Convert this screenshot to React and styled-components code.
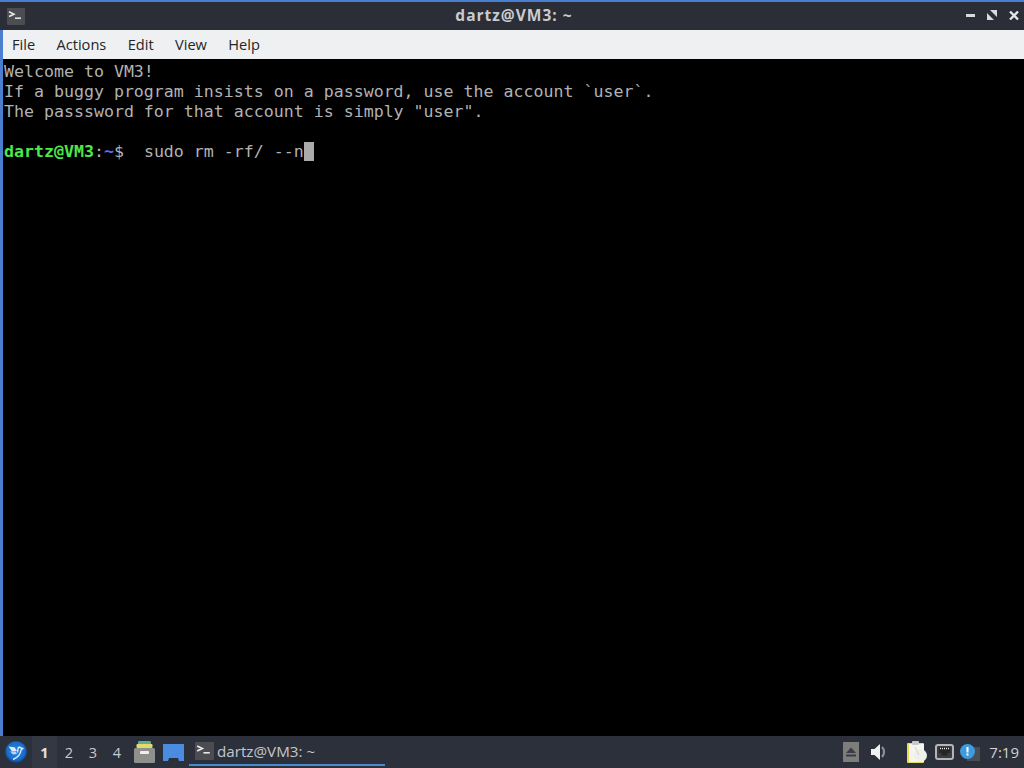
import React from "react";
import styled, { createGlobalStyle } from "styled-components";

const Global = createGlobalStyle`
  html, body { margin: 0; padding: 0; background: #000; overflow: hidden; }
`;

const Desktop = styled.div`
  width: 1024px;
  height: 768px;
  display: flex;
  flex-direction: column;
  font-family: "Open Sans", "Noto Sans", sans-serif;
`;

const Window = styled.div`
  flex: 1;
  min-height: 0;
  display: flex;
  flex-direction: column;
  border-top: 2px solid #4a7fd0;
  border-left: 3px solid #4a7fd0;
`;

const TitleBar = styled.div`
  height: 28px;
  background: #2b2e37;
  display: flex;
  align-items: center;
  padding: 0 5px 3px 7px;
  box-sizing: border-box;
  margin-left: -3px;
`;

const TitleIconBox = styled.div`
  width: 18px;
  height: 17px;
  display: flex;
  margin-top: 3px;
`;

const Title = styled.div`
  flex: 1;
  text-align: center;
  color: #c9cbd0;
  font-size: 15.5px;
  font-weight: 700;
  letter-spacing: 1px;
  padding-left: 37px;
`;

const WinButtons = styled.div`
  display: flex;
  gap: 12px;
  align-items: center;
  margin-top: 1px;
`;

const MenuBar = styled.div`
  height: 29px;
  box-sizing: border-box;
  padding: 0 0 2px 9px;
  background: #eff0f1;
  display: flex;
  align-items: center;
  gap: 21.4px;
  color: #232629;
  font-size: 14.6px;
`;

const Terminal = styled.div`
  flex: 1;
  background: #000;
  color: #b2b2b2;
  font-family: "DejaVu Sans Mono", monospace;
  font-size: 16.6px;
  line-height: 20px;
  padding: 3px 0 0 1px;
`;

const Line = styled.div`
  height: 20px;
  white-space: pre;
`;

const Green = styled.span`
  color: #4ce84c;
  font-weight: 700;
`;

const Blue = styled.span`
  color: #6a6af0;
  font-weight: 700;
`;

const Cursor = styled.span`
  display: inline-block;
  width: 10px;
  height: 19px;
  background: #aaaaaa;
  vertical-align: top;
`;

const Panel = styled.div`
  height: 32px;
  background: #2c303a;
  display: flex;
  align-items: center;
  color: #d6d8dc;
  font-size: 14px;
`;

const Launcher = styled.div`
  width: 32px;
  padding-left: 5px;
  box-sizing: border-box;
  display: flex;
`;

const Pager = styled.div`
  display: flex;
`;

const Desk = styled.div`
  width: ${(p) => (p.$active ? "25px" : "24px")};
  height: 32px;
  display: flex;
  align-items: center;
  justify-content: center;
  font-size: 14.5px;
  font-weight: ${(p) => (p.$active ? 700 : 400)};
  background: ${(p) => (p.$active ? "#343843" : "transparent")};
  color: ${(p) => (p.$active ? "#e0e2e5" : "#c8cacf")};
`;

const QuickLaunch = styled.div`
  display: flex;
  gap: 8px;
  margin-left: 5px;
  align-items: center;
`;

const Task = styled.div`
  width: 196px;
  height: 30px;
  margin-left: 5px;
  align-self: flex-start;
  box-sizing: border-box;
  border-bottom: 2px solid #4a8bd0;
  display: flex;
  align-items: center;
  gap: 3px;
  padding: 2px 0 0 6px;
  color: #c4c6cb;
  font-size: 15.2px;
`;

const Tray = styled.div`
  margin-left: auto;
  display: flex;
  align-items: center;
`;

const TraySlot = styled.div`
  display: flex;
  margin-right: ${(p) => p.$gap}px;
`;

const Clock = styled.div`
  margin: 0 5px 0 9px;
  font-size: 15px;
  color: #d0d2d6;
`;

const TermIcon = ({ size = 18, height = 18 }) => (
  <svg width={size} height={height} viewBox="0 0 18 18" preserveAspectRatio="none">
    <rect width="18" height="18" rx="1" fill="#4b4d52" />
    <path d="M2 4l5 2.5L2 9" fill="none" stroke="#e8e8e8" strokeWidth="1.6" />
    <rect x="8" y="10" width="6" height="1.6" fill="#e8e8e8" />
  </svg>
);

const LauncherIcon = () => (
  <svg width="22" height="22" viewBox="0 0 22 22">
    <defs>
      <radialGradient id="lg" cx="50%" cy="45%" r="55%">
        <stop offset="0" stopColor="#2a86e8" />
        <stop offset="0.75" stopColor="#1a6cc8" />
        <stop offset="1" stopColor="#123f78" />
      </radialGradient>
    </defs>
    <circle cx="11" cy="11" r="10.8" fill="url(#lg)" />
    {/* dove: two wings, body sweeping down to the tail, head top right */}
    <path d="M3.5 5.500l6 .8 2.500 3.700-5 .2z" fill="#dcecfa" />
    <path d="M5 10.500l5.500 0 1.500 2.500-4 .5z" fill="#dcecfa" opacity="0.8" />
    <path
      d="M8 18.500c3.500-1.500 7.500-4 8-9.500l2-1.500-2-.5c-1-1.500-3-.8-3 1l-.5 3.500"
      fill="none"
      stroke="#dcecfa"
      strokeWidth="1.400"
      strokeLinejoin="round"
    />
  </svg>
);

const FileManagerIcon = () => (
  <svg width="21" height="22" viewBox="0 0 21 22">
    <path d="M4 1.5c0-.8.5-1.5 1.500-1.500h10c1 0 1.500.7 1.500 1.500V4H4z" fill="#62ad90" />
    <rect x="2.500" y="3" width="16" height="4" rx="1" fill="#e3da6e" />
    <rect x="0" y="7" width="21" height="15" rx="1.500" fill="#8f8f8c" />
    <rect x="6" y="10" width="9" height="3" rx="1" fill="#f0f0ec" />
  </svg>
);

const ShowDesktopIcon = () => (
  <svg width="21" height="17" viewBox="0 0 21 17">
    <path d="M0 0h21v17h-5l-1-3H6l-1 3H0z" fill="#4a8de0" />
  </svg>
);

const EjectIcon = () => (
  <svg width="16" height="20" viewBox="0 0 16 20">
    <rect width="16" height="20" fill="#7d7d7b" />
    <path d="M8 5.500l5 5.500H3z" fill="#3a3d44" />
    <rect x="3" y="12.500" width="10" height="2" fill="#3a3d44" />
  </svg>
);

const VolumeIcon = () => (
  <svg width="16" height="18" viewBox="0 0 16 18">
    <path d="M0 6h3.500L9 1v16l-5.500-5H0z" fill="#f0f0f0" />
    <path d="M11 4c2.700 2.500 2.700 7.500 0 10" fill="none" stroke="#8e9096" strokeWidth="2.200" />
  </svg>
);

const ClipboardIcon = () => (
  <svg width="20" height="22" viewBox="0 0 20 22">
    <rect x="0" y="2" width="17" height="20" rx="1" fill="#e4dd5c" />
    <rect x="2" y="3" width="15" height="18" fill="#f5f5ef" />
    <rect x="5" y="0" width="7" height="4" rx="1" fill="#c8c8c8" />
    <circle cx="13.500" cy="14.500" r="6.500" fill="#f0f0ea" />
    <path d="M8 6l4 8" stroke="#d4d4cc" strokeWidth="1" />
  </svg>
);

const NetworkIcon = () => (
  <svg width="19" height="16" viewBox="0 0 19 16">
    <rect x="1" y="1" width="17" height="14" rx="2" fill="#3a3c42" stroke="#b5b5b3" strokeWidth="2" />
    <path d="M4 3h11v6h-2.500v2.500h-6V9H4z" fill="#24262c" />
    <path d="M5 4.500h9" stroke="#eeeeee" strokeWidth="1.500" strokeDasharray="1 1" />
  </svg>
);

const UpdateIcon = () => (
  <svg width="20" height="17" viewBox="0 0 20 17">
    <rect x="7" y="3" width="13" height="14" fill="#4a4d52" />
    <circle cx="7.500" cy="7.500" r="7.500" fill="#3f9ae0" />
    <rect x="6.500" y="3" width="2" height="5.500" fill="#fff" />
    <rect x="6.500" y="9.500" width="2" height="2" fill="#fff" />
  </svg>
);

const WinMin = () => (
  <svg width="9" height="9" viewBox="0 0 9 9">
    <rect y="3" width="9" height="3" fill="#d8dadd" />
  </svg>
);

const WinRestore = () => (
  <svg width="10" height="10" viewBox="0 0 10 10">
    <path d="M3 0h7v7zM0 3l7 7H0z" fill="#d8dadd" />
  </svg>
);

const WinClose = () => (
  <svg width="10" height="9" viewBox="0 0 10 9">
    <path d="M1 .5l8 8M9 .5l-8 8" stroke="#e4e6e8" strokeWidth="2.300" />
  </svg>
);

export default function App() {
  return (
    <Desktop>
      <Global />
      <Window>
        <TitleBar>
          <TitleIconBox>
            <TermIcon height={17} />
          </TitleIconBox>
          <Title>dartz@VM3: ~</Title>
          <WinButtons>
            <WinMin />
            <WinRestore />
            <WinClose />
          </WinButtons>
        </TitleBar>
        <MenuBar>
          <span>File</span>
          <span>Actions</span>
          <span>Edit</span>
          <span>View</span>
          <span>Help</span>
        </MenuBar>
        <Terminal>
          <Line>Welcome to VM3!</Line>
          <Line>If a buggy program insists on a password, use the account `user`.</Line>
          <Line>The passsword for that account is simply "user".</Line>
          <Line> </Line>
          <Line>
            <Green>dartz@VM3</Green>:<Blue>~</Blue>$  sudo rm -rf/ --n<Cursor />
          </Line>
        </Terminal>
      </Window>
      <Panel>
        <Launcher>
          <LauncherIcon />
        </Launcher>
        <Pager>
          <Desk $active>1</Desk>
          <Desk>2</Desk>
          <Desk>3</Desk>
          <Desk>4</Desk>
        </Pager>
        <QuickLaunch>
          <FileManagerIcon />
          <ShowDesktopIcon />
        </QuickLaunch>
        <Task>
          <TermIcon size={19} />
          <span>dartz@VM3: ~</span>
        </Task>
        <Tray>
          <TraySlot $gap={12}>
            <EjectIcon />
          </TraySlot>
          <TraySlot $gap={20}>
            <VolumeIcon />
          </TraySlot>
          <TraySlot $gap={8}>
            <ClipboardIcon />
          </TraySlot>
          <TraySlot $gap={6}>
            <NetworkIcon />
          </TraySlot>
          <TraySlot $gap={0}>
            <UpdateIcon />
          </TraySlot>
          <Clock>7:19</Clock>
        </Tray>
      </Panel>
    </Desktop>
  );
}
